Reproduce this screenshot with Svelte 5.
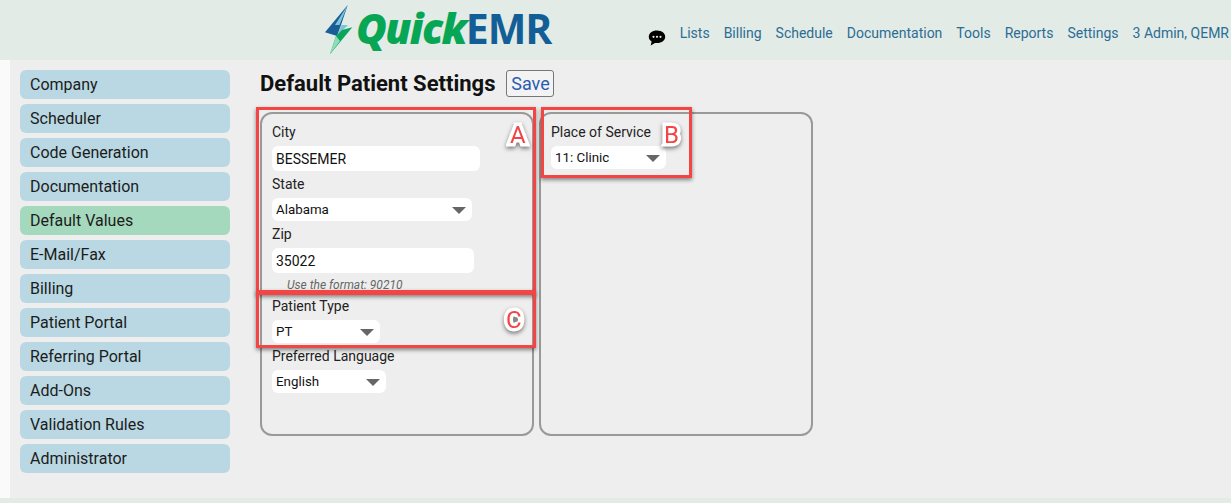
<script lang="ts">
    const menu = [
        "Company",
        "Scheduler",
        "Code Generation",
        "Documentation",
        "Default Values",
        "E-Mail/Fax",
        "Billing",
        "Patient Portal",
        "Referring Portal",
        "Add-Ons",
        "Validation Rules",
        "Administrator",
    ];

    const nav = ["Lists", "Billing", "Schedule", "Documentation", "Tools", "Reports", "Settings", "3 Admin, QEMR"];
</script>

<div class="Page">
    <header class="Top">
        <div class="logo">
            <svg width="28" height="50" viewBox="0 0 28 50">
                <path d="M22.700 0 L0 27.300 L12 31 L16 20 Z" fill="#1b5e96" />
                <path d="M22.700 0 L14.500 20 L23 20 L12 31 L16.500 20 L10 20 Z" fill="#7cc4d8" />
                <path d="M27.300 22.300 L5 49.300 L11 31 L17 25 Z" fill="#0ba45c" />
                <path d="M11 31 L5 49.300 L15 36 Z" fill="#8fdcb8" />
            </svg>
            <div class="word"><span class="quick">Quick</span><span class="emr">EMR</span></div>
        </div>
        <nav>
            <svg class="chat" width="18" height="16" viewBox="0 0 18 16">
                <path d="M9 .5C4.200.5.800 3.200.800 6.800c0 2 1 3.700 2.800 4.800L2.700 15.500 7 12.900c.6.100 1.300.2 2 .2 4.800 0 8.200-2.800 8.200-6.300S13.800.5 9 .5Z" fill="#000" />
                <circle cx="5.500" cy="6.800" r="1.100" fill="#e3ebe6" />
                <circle cx="9" cy="6.800" r="1.100" fill="#e3ebe6" />
                <circle cx="12.500" cy="6.800" r="1.100" fill="#e3ebe6" />
            </svg>
            {#each nav as item}
                <a href="#top">{item}</a>
            {/each}
        </nav>
    </header>

    <div class="Body">
        <aside>
            {#each menu as item}
                <div class="item" class:active={item === "Default Values"}>{item}</div>
            {/each}
        </aside>

        <main>
            <div class="title">
                <h1>Default Patient Settings</h1>
                <button>Save</button>
            </div>

            <div class="panels">
                <section>
                    <label for="city">City</label>
                    <input id="city" value="BESSEMER" style="width: 208px" />
                    <label for="state">State</label>
                    <div class="select" id="state" style="width: 200px">Alabama<i></i></div>
                    <label for="zip">Zip</label>
                    <input id="zip" value="35022" style="width: 202px" />
                    <small>Use the format: 90210</small>
                    <label for="ptype">Patient Type</label>
                    <div class="select" id="ptype" style="width: 108px">PT<i></i></div>
                    <label for="lang">Preferred Language</label>
                    <div class="select" id="lang" style="width: 114px">English<i></i></div>
                </section>
                <section>
                    <label for="pos">Place of Service</label>
                    <div class="select" id="pos" style="width: 115px">11: Clinic<i></i></div>
                </section>
            </div>

            <!-- callouts drawn over the screenshot -->
            <div class="box a"></div>
            <div class="box c"></div>
            <div class="box b"></div>
            <span class="mark ma">A</span>
            <span class="mark mb">B</span>
            <span class="mark mc">C<b></b></span>
        </main>
    </div>

    <footer></footer>
</div>

<style>
    :global(body) {
        margin: 0;
        background: #eeeeee;
    }

    .Page {
        display: flex;
        flex-direction: column;
        height: 503px;
        overflow: hidden;
        font-family: Roboto, "Liberation Sans", sans-serif;
        color: #111;
    }

    .Top {
        flex: none;
        height: 60px;
        background: #e3ebe6;
        display: flex;
        justify-content: space-between;
        padding-left: 325px;
        box-sizing: border-box;
    }

    .logo {
        display: flex;
        align-items: center;
        gap: 3px;
        height: 59px;
        font-family: "Open Sans", sans-serif;
        font-weight: 700;
    }

    .word {
        margin-top: -4px;
        white-space: nowrap;
    }

    .quick {
        color: #07a655;
        font-style: italic;
        font-weight: 800;
        font-size: 42px;
        letter-spacing: -1.6px;
    }

    .emr {
        color: #125f97;
        font-size: 41px;
        letter-spacing: -1.1px;
    }

    nav {
        display: flex;
        align-items: center;
        gap: 14px;
        height: 66px;
        font-size: 14px;
        white-space: nowrap;
        margin-right: 2px;
    }

    nav a {
        color: #2b6d94;
        text-decoration: none;
    }

    .chat {
        margin-top: 10px;
        margin-right: 0;
    }

    .Body {
        flex: 1;
        display: flex;
        min-height: 0;
        border-left: 10px solid #fafafa;
    }

    aside {
        flex: none;
        width: 210px;
        padding: 10px 0 0 10px;
        display: flex;
        flex-direction: column;
        gap: 5px;
    }

    .item {
        height: 29px;
        line-height: 29px;
        padding-left: 10px;
        border-radius: 6px;
        background: #b9d8e3;
        font-size: 16px;
        color: #1c1c1c;
    }

    .item.active {
        background: #a5d9bd;
    }

    main {
        position: relative;
        flex: 1;
        padding: 10px 0 0 30px;
    }

    .title {
        display: flex;
        align-items: center;
        gap: 11px;
        height: 27px;
    }

    h1 {
        margin: 0;
        font-size: 22px;
        font-weight: 700;
        color: #111;
    }

    button {
        width: 48px;
        height: 27px;
        padding: 0;
        background: #f3f3f3;
        border: 1px solid #777;
        border-radius: 3px;
        font-family: inherit;
        font-size: 18px;
        color: #2a5db0;
    }

    .panels {
        display: flex;
        gap: 5px;
        margin-top: 15px;
    }

    section {
        box-sizing: border-box;
        width: 274px;
        height: 324px;
        padding: 8px 10px 0;
        border: 2px solid #999;
        border-radius: 12px;
    }

    label {
        display: block;
        height: 20px;
        line-height: 20px;
        font-size: 14px;
        color: #222;
    }

    input {
        display: block;
        box-sizing: border-box;
        height: 25px;
        margin: 4px 0 3px;
        padding: 0 4px;
        border: 0;
        border-radius: 6px;
        background: #fff;
        font-family: inherit;
        font-size: 14px;
        color: #111;
    }

    .select {
        position: relative;
        box-sizing: border-box;
        height: 23px;
        line-height: 23px;
        margin: 4px 0 3px;
        padding: 0 4px;
        border-radius: 6px;
        background: #fff;
        font-size: 13.33px;
        color: #111;
    }

    .select i {
        position: absolute;
        right: 6px;
        top: 9px;
        border-left: 7px solid transparent;
        border-right: 7px solid transparent;
        border-top: 7px solid #666;
    }

    small {
        display: block;
        height: 15px;
        line-height: 15px;
        margin: 5px 0 3px 15px;
        font-size: 12px;
        font-style: italic;
        color: #666;
    }

    footer {
        flex: none;
        height: 5px;
        background: #e3ebe6;
    }

    .box {
        position: absolute;
        box-sizing: border-box;
        border: 3px solid #f44545;
        box-shadow: 0 2px 4px rgba(0, 0, 0, 0.45);
        pointer-events: none;
    }

    .a {
        left: 26px;
        top: 47px;
        width: 280px;
        height: 188px;
    }

    .c {
        left: 26px;
        top: 230px;
        width: 280px;
        height: 58px;
    }

    .b {
        left: 311px;
        top: 47px;
        width: 151px;
        height: 71px;
    }

    .mark {
        position: absolute;
        font-size: 24px;
        line-height: 28px;
        color: #f44545;
        -webkit-text-stroke: 7px #fff;
        paint-order: stroke fill;
        filter: drop-shadow(0 2px 2px rgba(0, 0, 0, 0.5));
    }

    .mark b {
        position: absolute;
        left: 7px;
        top: 11px;
        width: 5px;
        height: 5px;
        border-radius: 50%;
        background: #888;
    }

    .ma {
        left: 280px;
        top: 61px;
    }

    .mb {
        left: 434px;
        top: 61px;
    }

    .mc {
        left: 276px;
        top: 246px;
    }
</style>
